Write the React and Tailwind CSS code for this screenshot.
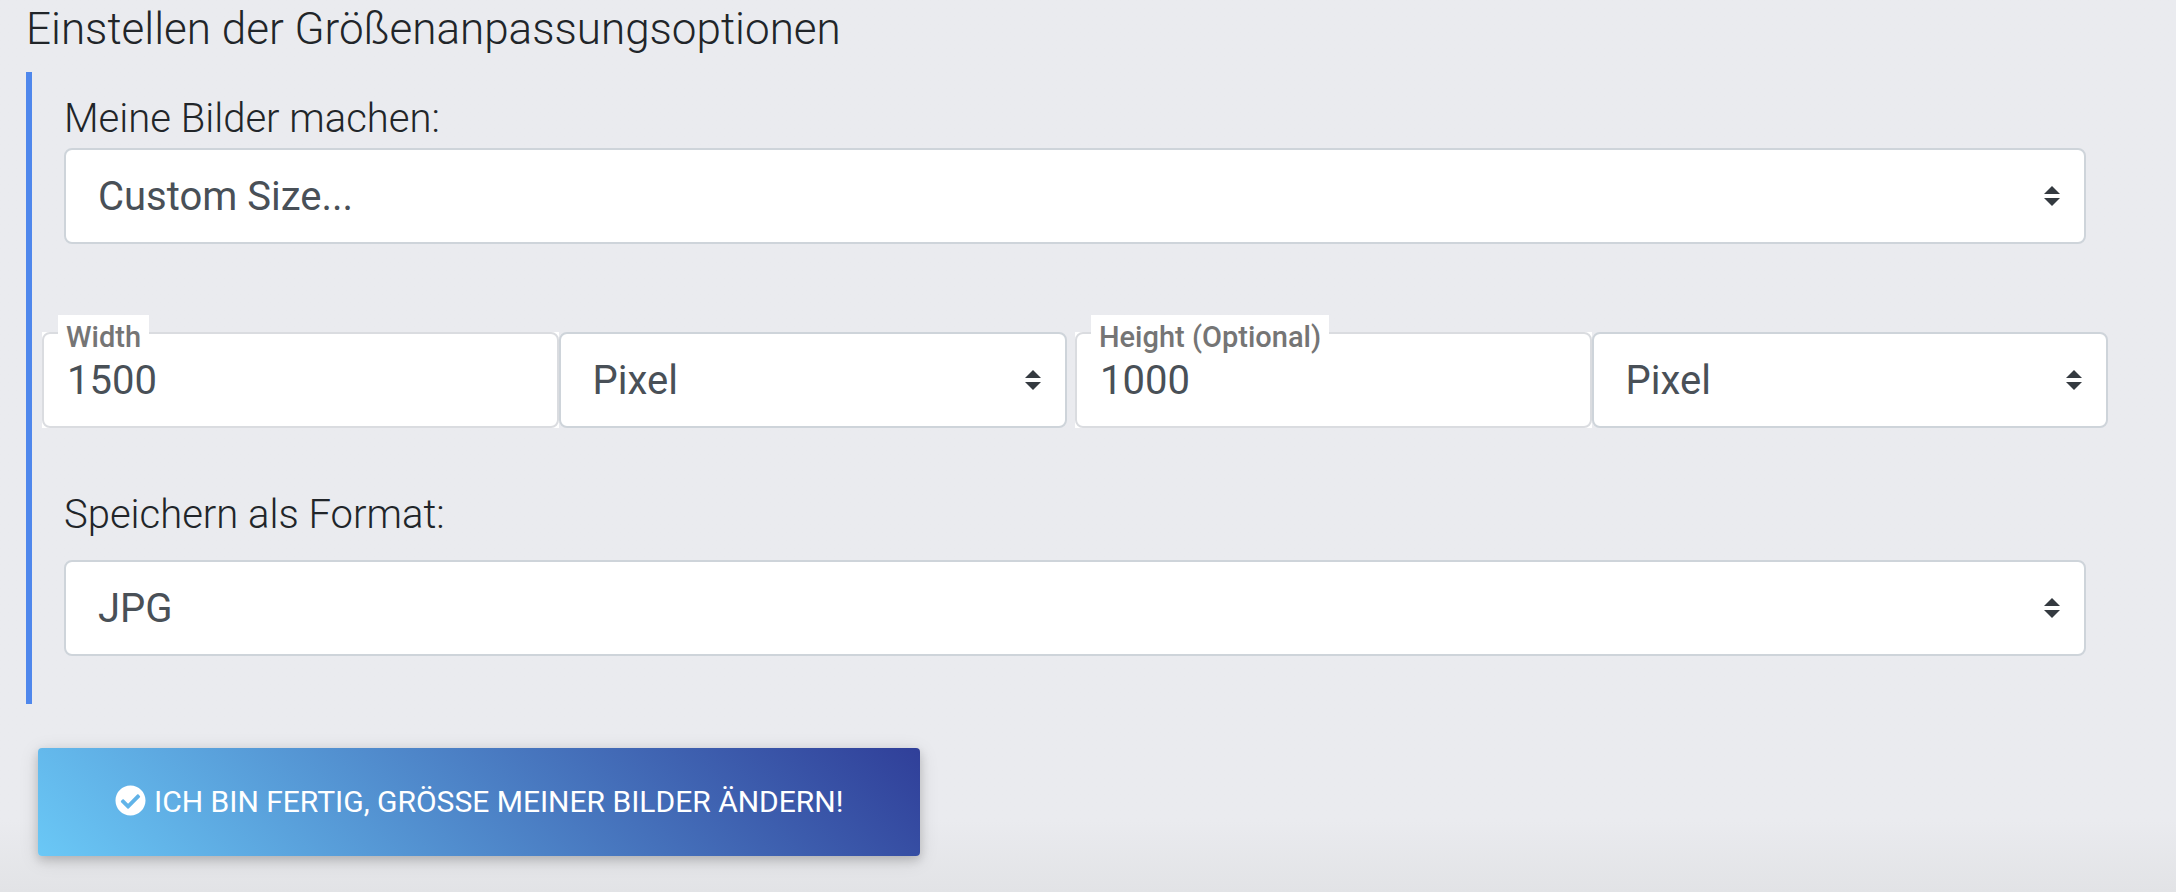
import React from 'react';
import { FaCheckCircle } from 'react-icons/fa';

const UNITS = ['Pixel', 'Prozent'];

const Select = ({ id, label, value, onChange, options }) => (
  <div className="relative">
    <select
      id={id}
      aria-label={label}
      value={value}
      onChange={(e) => onChange(e.target.value)}
      className="block w-full h-24 appearance-none rounded-lg border-2 border-[#ced4da] bg-white pt-0.5 pl-8 pr-16 text-[40px] leading-[60px] text-[#495057]"
    >
      {options.map((option) => (
        <option key={option}>{option}</option>
      ))}
    </select>
    <svg
      viewBox="0 0 4 5"
      className="pointer-events-none absolute right-[26px] top-1/2 h-5 w-4 -translate-y-1/2"
      aria-hidden="true"
    >
      <path fill="#343a40" d="M2 0L0 2h4zm0 5L0 3h4z" />
    </svg>
  </div>
);

const SizeField = ({ id, label, value, onChange }) => (
  <div className="relative flex-1 bg-white">
    <label
      htmlFor={id}
      className="absolute left-4 -top-[17px] bg-white px-2 pt-1 text-[29px] leading-9 font-medium text-[#757575]"
    >
      {label}
    </label>
    <input
      id={id}
      type="text"
      value={value}
      onChange={(e) => onChange(e.target.value)}
      className="block w-full h-24 rounded-lg border-2 border-[#dadce0] bg-white px-[23px] text-[40px] leading-[60px] text-[#495057]"
    />
  </div>
);

const App = () => {
  const [preset, setPreset] = React.useState('Custom Size...');
  const [width, setWidth] = React.useState('1500');
  const [widthUnit, setWidthUnit] = React.useState('Pixel');
  const [height, setHeight] = React.useState('1000');
  const [heightUnit, setHeightUnit] = React.useState('Pixel');
  const [format, setFormat] = React.useState('JPG');

  return (
    <div className="min-h-screen bg-[#eaebef] bg-linear-to-t from-[#e2e3e6] to-[#eaebef] to-[72px] pl-[26px] pr-[68px] font-['Roboto',sans-serif] text-[#212529]">
      <h1 className="pt-[3px] pb-[17px] text-[44px] leading-[52px] font-light">
        Einstellen der Größenanpassungsoptionen
      </h1>

      <form onSubmit={(e) => e.preventDefault()}>
        <div className="border-l-[6px] border-[#4f87ec] pl-[10px] pt-[18px] pb-12">
          <div className="px-[22px]">
            <label htmlFor="preset" className="block text-[40px] leading-[58px] font-light">
              Meine Bilder machen:
            </label>
            <Select
              id="preset"
              value={preset}
              onChange={setPreset}
              options={['Custom Size...', '25%', '50%', '75%']}
            />
          </div>

          <div className="mt-[88px] grid grid-cols-2">
            <div className="grid grid-cols-2">
              <SizeField id="width" label="Width" value={width} onChange={setWidth} />
              <div className="pr-2">
                <Select
                  id="width-unit"
                  label="Width unit"
                  value={widthUnit}
                  onChange={setWidthUnit}
                  options={UNITS}
                />
              </div>
            </div>
            <div className="grid grid-cols-2">
              <SizeField id="height" label="Height (Optional)" value={height} onChange={setHeight} />
              <Select
                id="height-unit"
                label="Height unit"
                value={heightUnit}
                onChange={setHeightUnit}
                options={UNITS}
              />
            </div>
          </div>

          <div className="mt-[58px] px-[22px]">
            <label htmlFor="format" className="mb-4 block text-[40px] leading-[58px] font-light">
              Speichern als Format:
            </label>
            <Select
              id="format"
              value={format}
              onChange={setFormat}
              options={['JPG', 'PNG', 'GIF', 'BMP']}
            />
          </div>
        </div>

        <button
          type="submit"
          className="mt-11 ml-3 flex h-[108px] items-center gap-2 rounded bg-[linear-gradient(45deg,#6ac8f6,#303f99)] px-[77px] text-[30px] leading-[44px] text-white uppercase shadow-[0_4px_10px_rgba(0,0,0,0.16),0_4px_20px_rgba(0,0,0,0.12)]"
        >
          <FaCheckCircle className="mb-1 size-[31px]" aria-hidden="true" />
          Ich bin fertig, Grösse meiner Bilder ändern!
        </button>
      </form>
    </div>
  );
};

export default App;
